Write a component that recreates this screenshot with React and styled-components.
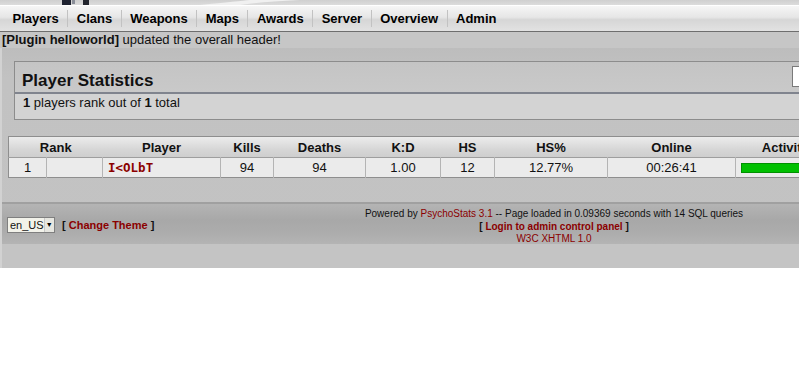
import React from "react";
import styled, { createGlobalStyle } from "styled-components";

const Global = createGlobalStyle`
  html, body { margin: 0; padding: 0; background: #ffffff; overflow: hidden; }
  body { font-family: "Liberation Sans", Arial, sans-serif; color: #000; }
`;

const Page = styled.div`
  width: 799px;
  overflow: hidden;
`;

const Banner = styled.div`
  height: 5px;
  background: linear-gradient(#cfcfcf, #dcdcdc);
  svg { display: block; }
`;

const Nav = styled.nav`
  display: flex;
  align-items: center;
  height: 25px;
  padding-left: 4px;
  border-top: 1px solid #ffffff;
  border-bottom: 1px solid #6e6e6e;
  background: linear-gradient(#f6f6f6 0%, #e6e6e6 45%, #d6d6d6 55%, #e2e2e2 100%);
`;

const NavItem = styled.a`
  display: flex;
  align-items: center;
  height: 17px;
  padding: 0 8.5px;
  font-size: 13px;
  font-weight: bold;
  color: #000;
  text-decoration: none;
  border-left: ${(p) => (p.$first ? "none" : "1px solid #c2c2c2")};
`;

const PluginBar = styled.div`
  height: 16px;
  padding-left: 2px;
  background: #c6c6c6;
  font-size: 13px;
  line-height: 16px;
  color: #111;
  b { font-weight: bold; }
`;

const Main = styled.main`
  background: linear-gradient(#bdbdbd, #c2c2c2 30px, #c3c3c3);
  border-left: 2px solid #d2d2d2;
  padding-top: 13px;
  overflow: hidden;
`;

const StatBox = styled.section`
  margin-left: 12px;
  width: 820px;
  border: 1px solid #8c8c8c;
  background: #d3d3d3;
`;

const BoxHead = styled.div`
  display: flex;
  align-items: flex-end;
  height: 30px;
  padding: 0 7px;
  background: linear-gradient(#c4c4c4, #c9c9c9);
  border-bottom: 2px solid #80848e;
`;

const Title = styled.h2`
  margin: 0 0 1px 0;
  font-size: 17px;
  font-weight: bold;
  color: #111;
`;

const MiniInput = styled.div`
  margin-left: auto;
  align-self: flex-start;
  margin-top: 4px;
  width: 34px;
  height: 19px;
  background: #fff;
  border: 1px solid #7a7a7a;
`;

const Sub = styled.div`
  padding: 2px 8px 0;
  height: 23px;
  font-size: 13px;
  line-height: 14px;
  color: #111;
  b { font-weight: bold; }
`;

const Table = styled.table`
  margin: 16px 0 0 6px;
  width: 827px;
  table-layout: fixed;
  border-collapse: collapse;
  border: 1px solid #8e8e8e;
  font-size: 13px;
`;

const HeadRow = styled.tr`
  height: 21px;
  background: linear-gradient(#ececec, #d6d6d6 60%, #cdcdcd);
`;

const Th = styled.th`
  padding: 0;
  font-weight: bold;
  font-size: 13px;
  text-align: center;
  color: #111;
`;

const Row = styled.tr`
  height: 20px;
  background: #ebebeb;
  border-top: 1px solid #9e9e9e;
`;

const Td = styled.td`
  padding: 0 ${(p) => (p.$left ? "5px" : "0")};
  text-align: ${(p) => (p.$left ? "left" : "center")};
  border-left: 1px solid #b4b4b4;
  color: #111;
  &:first-child { border-left: none; }
`;

const PlayerLink = styled.a`
  font-family: "DejaVu Sans Mono", monospace;
  font-weight: bold;
  font-size: 12.5px;
  color: #8b0000;
  text-decoration: none;
`;

const Bar = styled.div`
  width: 100px;
  height: 8px;
  background: #00c000;
  border: 1px solid #009000;
`;

const Footer = styled.footer`
  margin-top: 24px;
  display: grid;
  grid-template-columns: 307px 1fr;
  height: 40px;
  border-top: 2px solid #a0a0a0;
  background: linear-gradient(#b4b4b4, #a8a8a8 40%, #acacac 70%, #b4b4b4);
`;

const FootLeft = styled.div`
  display: flex;
  align-items: center;
  gap: 7px;
  padding-left: 5px;
  padding-top: 1px;
`;

const SelectBox = styled.div`
  display: flex;
  width: 46px;
  height: 14px;
  border: 1px solid #7f7f7f;
  background: #f2f2ea;
  font-size: 11px;
  line-height: 14px;
`;

const SelectText = styled.span`
  flex: 1;
  padding-left: 2px;
  color: #111;
`;

const SelectBtn = styled.span`
  width: 14px;
  display: flex;
  align-items: center;
  justify-content: center;
  background: #e6e6e0;
  border-left: 1px solid #c8c8c8;
  font-size: 7px;
  color: #000;
`;

const Bracket = styled.span`
  font-size: 11px;
  font-weight: bold;
  color: #111;
  white-space: nowrap;
`;

const RedLink = styled.a`
  color: #8b0000;
  font-weight: ${(p) => (p.$bold ? "bold" : "normal")};
  text-decoration: none;
`;

const FootRight = styled.div`
  text-align: center;
  font-size: 10px;
  line-height: 12.5px;
  padding-top: 4px;
  color: #111;
`;

const Line = styled.div`
  white-space: nowrap;
`;

const Bottom = styled.div`
  height: 24px;
  background: #c4c4c4;
`;

const navItems = ["Players", "Clans", "Weapons", "Maps", "Awards", "Server", "Overview", "Admin"];

export default function App() {
  return (
    <Page>
      <Global />
      <Banner>
        <svg width="799" height="5" viewBox="0 0 799 5">
          <rect x="62" y="0" width="9" height="5" fill="#1e2230" />
          <rect x="72" y="0" width="3" height="4" fill="#8a8e98" />
          <rect x="83" y="0" width="6" height="5" fill="#23262e" />
          <path d="M200 5 Q240 1 250 0 L300 0 Q260 2 240 5 Z" fill="#f0f0f0" />
        </svg>
      </Banner>
      <Nav>
        {navItems.map((n, i) => (
          <NavItem key={n} $first={i === 0} href="#">{n}</NavItem>
        ))}
      </Nav>
      <PluginBar>
        <b>[Plugin helloworld]</b> updated the overall header!
      </PluginBar>
      <Main>
        <StatBox>
          <BoxHead>
            <Title>Player Statistics</Title>
            <MiniInput />
          </BoxHead>
          <Sub>
            <b>1</b> players rank out of <b>1</b> total
          </Sub>
        </StatBox>
        <Table>
          <colgroup>
            <col style={{ width: 38 }} />
            <col style={{ width: 56 }} />
            <col style={{ width: 118 }} />
            <col style={{ width: 53 }} />
            <col style={{ width: 92 }} />
            <col style={{ width: 75 }} />
            <col style={{ width: 54 }} />
            <col style={{ width: 113 }} />
            <col style={{ width: 128 }} />
            <col style={{ width: 100 }} />
          </colgroup>
          <thead>
            <HeadRow>
              <Th colSpan={2}>Rank</Th>
              <Th>Player</Th>
              <Th>Kills</Th>
              <Th>Deaths</Th>
              <Th>K:D</Th>
              <Th>HS</Th>
              <Th>HS%</Th>
              <Th>Online</Th>
              <Th>Activity</Th>
            </HeadRow>
          </thead>
          <tbody>
            <Row>
              <Td>1</Td>
              <Td></Td>
              <Td $left><PlayerLink href="#">I&lt;OLbT</PlayerLink></Td>
              <Td>94</Td>
              <Td>94</Td>
              <Td>1.00</Td>
              <Td>12</Td>
              <Td>12.77%</Td>
              <Td>00:26:41</Td>
              <Td $left><Bar /></Td>
            </Row>
          </tbody>
        </Table>
        <Footer>
          <FootLeft>
            <SelectBox>
              <SelectText>en_US</SelectText>
              <SelectBtn>▼</SelectBtn>
            </SelectBox>
            <Bracket>
              [ <RedLink $bold href="#">Change Theme</RedLink> ]
            </Bracket>
          </FootLeft>
          <FootRight>
            <Line>
              Powered by <RedLink href="#">PsychoStats 3.1</RedLink> -- Page loaded in 0.09369 seconds with 14 SQL queries
            </Line>
            <Line>
              <b>[ <RedLink $bold href="#">Login to admin control panel</RedLink> ]</b>
            </Line>
            <Line>
              <RedLink href="#">W3C XHTML 1.0</RedLink>
            </Line>
          </FootRight>
        </Footer>
        <Bottom />
      </Main>
    </Page>
  );
}
